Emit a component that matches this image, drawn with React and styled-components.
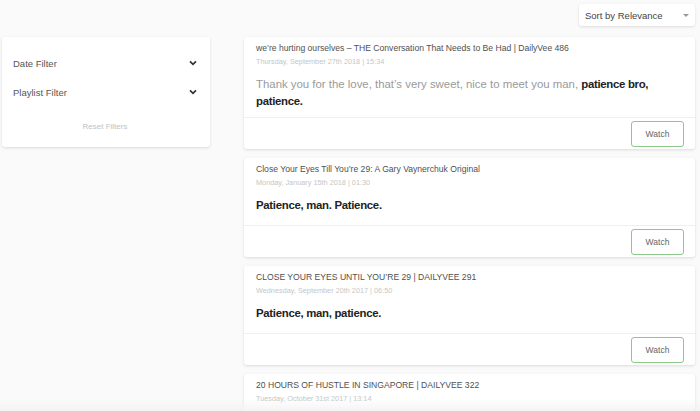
import React from 'react';
import styled, { createGlobalStyle } from 'styled-components';

// //////////////// GLOBAL //////////////// //
const GlobalStyle = createGlobalStyle`
  html, body {
    margin: 0;
    padding: 0;
    background: #fafafa;
    font-family: "Liberation Sans", Arial, sans-serif;
    color: #333;
  }
  * { box-sizing: border-box; }
`;

// //////////////// LAYOUT //////////////// //
const Page = styled.div`
  width: 700px;
  height: 411px;
  overflow: hidden;
  position: relative;
  padding: 4px 5px 0 2px;
`;

const TopBar = styled.div`
  display: flex;
  justify-content: flex-end;
  height: 33px;
`;

const Columns = styled.div`
  display: flex;
  align-items: flex-start;
  gap: 34px;
`;

const BottomFade = styled.div`
  position: absolute;
  left: 0;
  right: 0;
  bottom: 0;
  height: 12px;
  background: linear-gradient(to bottom, rgba(250, 250, 250, 0), rgba(242, 242, 242, 0.85));
  pointer-events: none;
`;

// //////////////// SORT //////////////// //
const SortBox = styled.div`
  width: 116px;
  height: 22px;
  background: #fff;
  border-radius: 3px;
  box-shadow: 0 1px 3px rgba(0, 0, 0, 0.12);
  display: flex;
  align-items: center;
  justify-content: space-between;
  padding: 0 6px;
  font-size: 9.5px;
  color: #444;
`;

const Caret = styled.span`
  width: 0;
  height: 0;
  border-left: 3px solid transparent;
  border-right: 3px solid transparent;
  border-top: 3px solid #999;
`;

// //////////////// SIDEBAR //////////////// //
const FilterCard = styled.div`
  width: 208px;
  background: #fff;
  border-radius: 3px;
  box-shadow: 0 1px 3px rgba(0, 0, 0, 0.13);
  padding: 18px 13px 15px 11px;
`;

const FilterRow = styled.div`
  display: flex;
  justify-content: space-between;
  align-items: center;
  height: 16px;
  margin-bottom: 13px;
  font-size: 9.5px;
  color: #555;
`;

const Reset = styled.div`
  text-align: center;
  font-size: 8px;
  line-height: 10px;
  color: #c2c2c2;
  margin-top: 22px;
`;

const Chevron = () => (
  <svg width="8" height="6" viewBox="0 0 8 6">
    <path d="M1 1.3 L4 4.3 L7 1.3" fill="none" stroke="#333" strokeWidth="1.7" />
  </svg>
);

// //////////////// CARDS //////////////// //
const List = styled.div`
  flex: 1;
  display: flex;
  flex-direction: column;
  gap: 9px;
`;

const Card = styled.div`
  background: #fff;
  border-radius: 3px;
  box-shadow: 0 1px 3px rgba(0, 0, 0, 0.13);
`;

const CardBody = styled.div`
  padding: 4px 12px 7px 12px;
  min-height: 68px;
  border-bottom: 1px solid #efefef;
`;

const Title = styled.div`
  font-size: 8.6px;
  line-height: 14px;
  color: #505050;
  white-space: nowrap;
`;

const DateLine = styled.div`
  font-size: 7.3px;
  line-height: 14px;
  color: #c6c6c6;
`;

const Quote = styled.div`
  margin-top: 7px;
  font-size: 11.4px;
  line-height: 17px;
  font-weight: 700;
  letter-spacing: -0.3px;
  color: #222;
`;

const Muted = styled.span`
  color: #9a9a9a;
  font-weight: 400;
  letter-spacing: 0;
`;

const CardFooter = styled.div`
  display: flex;
  justify-content: flex-end;
  padding: 3px 11px 2px 12px;
`;

const WatchButton = styled.button`
  width: 53px;
  height: 26px;
  background: #fff;
  border: 1px solid #8cc88a;
  border-radius: 3px;
  font-family: inherit;
  font-size: 8.5px;
  color: #666;
  padding: 0;
`;

// //////////////// DATA //////////////// //
const videos = [
  {
    title: 'we\u2019re hurting ourselves \u2013 THE Conversation That Needs to Be Had | DailyVee 486',
    date: 'Thursday, September 27th 2018 | 15:34',
    muted: 'Thank you for the love, that\u2019s very sweet, nice to meet you man, ',
    quote: 'patience bro, patience.',
  },
  {
    title: 'Close Your Eyes Till You\u2019re 29: A Gary Vaynerchuk Original',
    date: 'Monday, January 15th 2018 | 01:30',
    quote: 'Patience, man. Patience.',
  },
  {
    title: 'CLOSE YOUR EYES UNTIL YOU\u2019RE 29 | DAILYVEE 291',
    date: 'Wednesday, September 20th 2017 | 06:50',
    quote: 'Patience, man, patience.',
  },
  {
    title: '20 HOURS OF HUSTLE IN SINGAPORE | DAILYVEE 322',
    date: 'Tuesday, October 31st 2017 | 13:14',
    quote: 'Patience.',
  },
];

// //////////////// MAIN COMPONENT //////////////// //
const App = () => (
  <Page>
    <GlobalStyle />
    <TopBar>
      <SortBox>
        Sort by Relevance
        <Caret />
      </SortBox>
    </TopBar>
    <Columns>
      <FilterCard>
        <FilterRow>
          Date Filter
          <Chevron />
        </FilterRow>
        <FilterRow>
          Playlist Filter
          <Chevron />
        </FilterRow>
        <Reset>Reset Filters</Reset>
      </FilterCard>
      <List>
        {videos.map((v) => (
          <Card key={v.title}>
            <CardBody>
              <Title>{v.title}</Title>
              <DateLine>{v.date}</DateLine>
              <Quote>
                {v.muted && <Muted>{v.muted}</Muted>}
                {v.quote}
              </Quote>
            </CardBody>
            <CardFooter>
              <WatchButton>Watch</WatchButton>
            </CardFooter>
          </Card>
        ))}
      </List>
    </Columns>
    <BottomFade />
  </Page>
);

export default App;
